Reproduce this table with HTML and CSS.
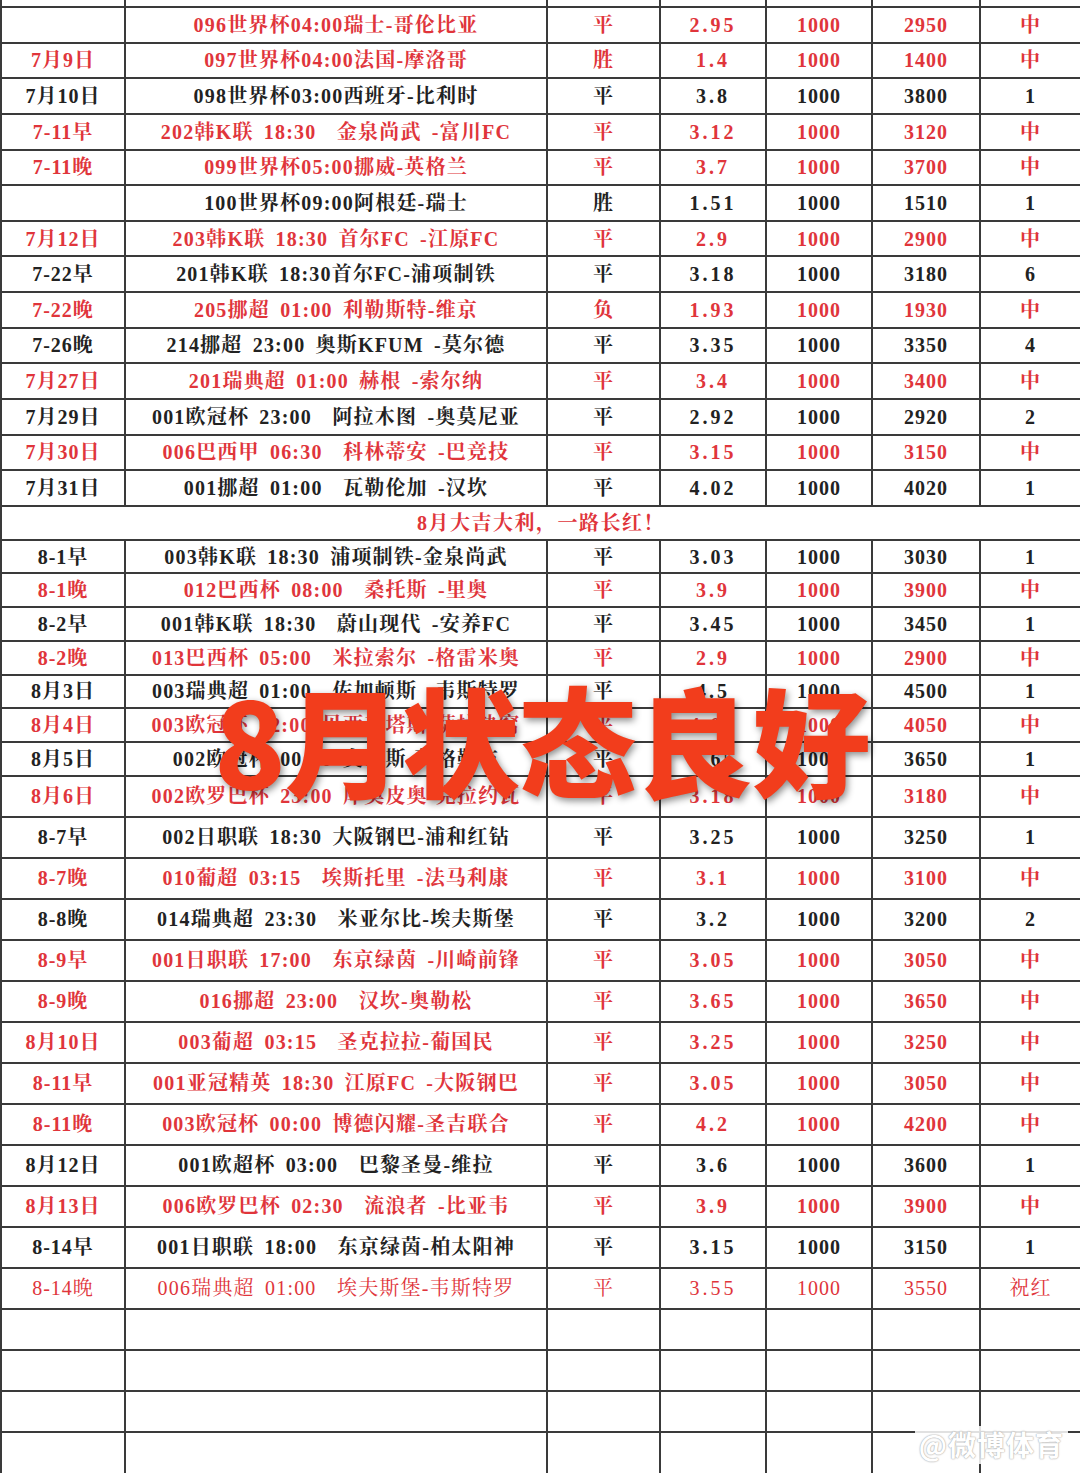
FILE: index.html
```html
<!DOCTYPE html>
<html lang="zh-CN">
<head>
<meta charset="utf-8">
<title>赛事记录</title>
<link rel="stylesheet" href="styles.css">
</head>
<body>
<div class="sheet">
  <div class="row top"><div class="c"></div><div class="c"></div><div class="c"></div><div class="c"></div><div class="c"></div><div class="c"></div><div class="c"></div></div>

  <div class="row a red"><div class="c"></div><div class="c m">096世界杯04:00瑞士-哥伦比亚</div><div class="c">平</div><div class="c o">2.95</div><div class="c">1000</div><div class="c">2950</div><div class="c">中</div></div>
  <div class="row a red"><div class="c">7月9日</div><div class="c m">097世界杯04:00法国-摩洛哥</div><div class="c">胜</div><div class="c o">1.4</div><div class="c">1000</div><div class="c">1400</div><div class="c">中</div></div>
  <div class="row a"><div class="c">7月10日</div><div class="c m">098世界杯03:00西班牙-比利时</div><div class="c">平</div><div class="c o">3.8</div><div class="c">1000</div><div class="c">3800</div><div class="c">1</div></div>
  <div class="row a red"><div class="c">7-11早</div><div class="c m">202韩K联 18:30  金泉尚武 -富川FC</div><div class="c">平</div><div class="c o">3.12</div><div class="c">1000</div><div class="c">3120</div><div class="c">中</div></div>
  <div class="row a red"><div class="c">7-11晚</div><div class="c m">099世界杯05:00挪威-英格兰</div><div class="c">平</div><div class="c o">3.7</div><div class="c">1000</div><div class="c">3700</div><div class="c">中</div></div>
  <div class="row a"><div class="c"></div><div class="c m">100世界杯09:00阿根廷-瑞士</div><div class="c">胜</div><div class="c o">1.51</div><div class="c">1000</div><div class="c">1510</div><div class="c">1</div></div>
  <div class="row a red"><div class="c">7月12日</div><div class="c m">203韩K联 18:30 首尔FC -江原FC</div><div class="c">平</div><div class="c o">2.9</div><div class="c">1000</div><div class="c">2900</div><div class="c">中</div></div>
  <div class="row a"><div class="c">7-22早</div><div class="c m">201韩K联 18:30首尔FC-浦项制铁</div><div class="c">平</div><div class="c o">3.18</div><div class="c">1000</div><div class="c">3180</div><div class="c">6</div></div>
  <div class="row a red"><div class="c">7-22晚</div><div class="c m">205挪超 01:00 利勒斯特-维京</div><div class="c">负</div><div class="c o">1.93</div><div class="c">1000</div><div class="c">1930</div><div class="c">中</div></div>
  <div class="row a"><div class="c">7-26晚</div><div class="c m">214挪超 23:00 奥斯KFUM -莫尔德</div><div class="c">平</div><div class="c o">3.35</div><div class="c">1000</div><div class="c">3350</div><div class="c">4</div></div>
  <div class="row a red"><div class="c">7月27日</div><div class="c m">201瑞典超 01:00 赫根 -索尔纳</div><div class="c">平</div><div class="c o">3.4</div><div class="c">1000</div><div class="c">3400</div><div class="c">中</div></div>
  <div class="row a"><div class="c">7月29日</div><div class="c m">001欧冠杯 23:00  阿拉木图 -奥莫尼亚</div><div class="c">平</div><div class="c o">2.92</div><div class="c">1000</div><div class="c">2920</div><div class="c">2</div></div>
  <div class="row a red"><div class="c">7月30日</div><div class="c m">006巴西甲 06:30  科林蒂安 -巴竞技</div><div class="c">平</div><div class="c o">3.15</div><div class="c">1000</div><div class="c">3150</div><div class="c">中</div></div>
  <div class="row a"><div class="c">7月31日</div><div class="c m">001挪超 01:00  瓦勒伦加 -汉坎</div><div class="c">平</div><div class="c o">4.02</div><div class="c">1000</div><div class="c">4020</div><div class="c">1</div></div>

  <div class="row banner red"><div class="c span">8月大吉大利，一路长红！</div></div>

  <div class="row b"><div class="c">8-1早</div><div class="c m">003韩K联 18:30 浦项制铁-金泉尚武</div><div class="c">平</div><div class="c o">3.03</div><div class="c">1000</div><div class="c">3030</div><div class="c">1</div></div>
  <div class="row b red"><div class="c">8-1晚</div><div class="c m">012巴西杯 08:00  桑托斯 -里奥</div><div class="c">平</div><div class="c o">3.9</div><div class="c">1000</div><div class="c">3900</div><div class="c">中</div></div>
  <div class="row b"><div class="c">8-2早</div><div class="c m">001韩K联 18:30  蔚山现代 -安养FC</div><div class="c">平</div><div class="c o">3.45</div><div class="c">1000</div><div class="c">3450</div><div class="c">1</div></div>
  <div class="row b red"><div class="c">8-2晚</div><div class="c m">013巴西杯 05:00  米拉索尔 -格雷米奥</div><div class="c">平</div><div class="c o">2.9</div><div class="c">1000</div><div class="c">2900</div><div class="c">中</div></div>
  <div class="row b"><div class="c">8月3日</div><div class="c m">003瑞典超 01:00  佐加顿斯 -韦斯特罗</div><div class="c">平</div><div class="c o">4.5</div><div class="c">1000</div><div class="c">4500</div><div class="c">1</div></div>
  <div class="row b red"><div class="c">8月4日</div><div class="c m">003欧冠杯 02:00 贝西克塔斯-萨拉热窝</div><div class="c">平</div><div class="c o">4.05</div><div class="c">1000</div><div class="c">4050</div><div class="c">中</div></div>
  <div class="row b"><div class="c">8月5日</div><div class="c m">002欧冠杯 00:30 奥胡斯-萨格勒布</div><div class="c">平</div><div class="c o">3.65</div><div class="c">1000</div><div class="c">3650</div><div class="c">1</div></div>

  <div class="row c3 red"><div class="c">8月6日</div><div class="c m">002欧罗巴杯 23:00 库奥皮奥-克拉约瓦</div><div class="c">平</div><div class="c o">3.18</div><div class="c">1000</div><div class="c">3180</div><div class="c">中</div></div>
  <div class="row c3"><div class="c">8-7早</div><div class="c m">002日职联 18:30 大阪钢巴-浦和红钻</div><div class="c">平</div><div class="c o">3.25</div><div class="c">1000</div><div class="c">3250</div><div class="c">1</div></div>
  <div class="row c3 red"><div class="c">8-7晚</div><div class="c m">010葡超 03:15  埃斯托里 -法马利康</div><div class="c">平</div><div class="c o">3.1</div><div class="c">1000</div><div class="c">3100</div><div class="c">中</div></div>
  <div class="row c3"><div class="c">8-8晚</div><div class="c m">014瑞典超 23:30  米亚尔比-埃夫斯堡</div><div class="c">平</div><div class="c o">3.2</div><div class="c">1000</div><div class="c">3200</div><div class="c">2</div></div>
  <div class="row c3 red"><div class="c">8-9早</div><div class="c m">001日职联 17:00  东京绿茵 -川崎前锋</div><div class="c">平</div><div class="c o">3.05</div><div class="c">1000</div><div class="c">3050</div><div class="c">中</div></div>
  <div class="row c3 red"><div class="c">8-9晚</div><div class="c m">016挪超 23:00  汉坎-奥勒松</div><div class="c">平</div><div class="c o">3.65</div><div class="c">1000</div><div class="c">3650</div><div class="c">中</div></div>
  <div class="row c3 red"><div class="c">8月10日</div><div class="c m">003葡超 03:15  圣克拉拉-葡国民</div><div class="c">平</div><div class="c o">3.25</div><div class="c">1000</div><div class="c">3250</div><div class="c">中</div></div>
  <div class="row c3 red"><div class="c">8-11早</div><div class="c m">001亚冠精英 18:30 江原FC -大阪钢巴</div><div class="c">平</div><div class="c o">3.05</div><div class="c">1000</div><div class="c">3050</div><div class="c">中</div></div>
  <div class="row c3 red"><div class="c">8-11晚</div><div class="c m">003欧冠杯 00:00 博德闪耀-圣吉联合</div><div class="c">平</div><div class="c o">4.2</div><div class="c">1000</div><div class="c">4200</div><div class="c">中</div></div>
  <div class="row c3"><div class="c">8月12日</div><div class="c m">001欧超杯 03:00  巴黎圣曼-维拉</div><div class="c">平</div><div class="c o">3.6</div><div class="c">1000</div><div class="c">3600</div><div class="c">1</div></div>
  <div class="row c3 red"><div class="c">8月13日</div><div class="c m">006欧罗巴杯 02:30  流浪者 -比亚韦</div><div class="c">平</div><div class="c o">3.9</div><div class="c">1000</div><div class="c">3900</div><div class="c">中</div></div>
  <div class="row c3"><div class="c">8-14早</div><div class="c m">001日职联 18:00  东京绿茵-柏太阳神</div><div class="c">平</div><div class="c o">3.15</div><div class="c">1000</div><div class="c">3150</div><div class="c">1</div></div>
  <div class="row c3 red light"><div class="c">8-14晚</div><div class="c m">006瑞典超 01:00  埃夫斯堡-韦斯特罗</div><div class="c">平</div><div class="c o">3.55</div><div class="c">1000</div><div class="c">3550</div><div class="c">祝红</div></div>

  <div class="row c3"><div class="c"></div><div class="c"></div><div class="c"></div><div class="c"></div><div class="c"></div><div class="c"></div><div class="c"></div></div>
  <div class="row c3"><div class="c"></div><div class="c"></div><div class="c"></div><div class="c"></div><div class="c"></div><div class="c"></div><div class="c"></div></div>
  <div class="row c3"><div class="c"></div><div class="c"></div><div class="c"></div><div class="c"></div><div class="c"></div><div class="c"></div><div class="c"></div></div>
  <div class="row c3 last"><div class="c"></div><div class="c"></div><div class="c"></div><div class="c"></div><div class="c"></div><div class="c"></div><div class="c"></div></div>

  <div class="stamp">8月状态良好</div>
  <div class="mark">@微博体育</div>
</div>
</body>
</html>
```

FILE: styles.css
```css
html, body {
  margin: 0;
  padding: 0;
  background: #ffffff;
}

.sheet {
  position: relative;
  width: 1080px;
  height: 1473px;
  overflow: hidden;
  box-sizing: border-box;
  border-left: 2px solid #3a3a3a;
  font-family: "Liberation Serif", "Noto Serif CJK SC", "Noto Sans CJK SC", serif;
  font-weight: 700;
  font-size: 20px;
  color: #222222;
}

.row {
  display: grid;
  grid-template-columns: 124px 422px 113px 106px 106px 108px 1fr;
  box-sizing: border-box;
  border-bottom: 2px solid #3a3a3a;
}

.row.top { height: 8px; }
.row.a { height: 35.64px; }
.row.banner { height: 34px; grid-template-columns: 1fr; }
.row.b { height: 33.72px; }
.row.c3 { height: 41px; }
.row.last { border-bottom: none; }

.c {
  display: flex;
  align-items: center;
  justify-content: center;
  box-sizing: border-box;
  border-right: 2px solid #3a3a3a;
  white-space: pre;
  line-height: 1;
  overflow: hidden;
  letter-spacing: 1px;
}

.c:last-child { border-right: none; }
.c.span { border-right: none; letter-spacing: 1.5px; }

.c.m {
  letter-spacing: 1.2px;
  word-spacing: 4px;
}

.c.o { letter-spacing: 3px; }

.red { color: #e0353b; }
.light { font-weight: 400; }

.stamp {
  position: absolute;
  left: 212px;
  top: 673px;
  font-family: "Noto Sans CJK SC", "Noto Sans", sans-serif;
  font-weight: 900;
  font-size: 118px;
  line-height: 1.1;
  color: #f23d1c;
  letter-spacing: -1px;
  white-space: nowrap;
  text-shadow: 2px 3px 7px rgba(0, 0, 0, 0.45);
}

.mark {
  position: absolute;
  right: 12px;
  top: 1426px;
  padding: 2px 4px;
  font-family: "Noto Sans CJK SC", sans-serif;
  font-weight: 700;
  font-size: 28px;
  line-height: 1.2;
  color: #ffffff;
  background: rgba(255, 255, 255, 0.85);
  text-shadow: 0 0 2px #b0b0b0, 0 0 1px #a0a0a0;
  letter-spacing: 1px;
}
```
